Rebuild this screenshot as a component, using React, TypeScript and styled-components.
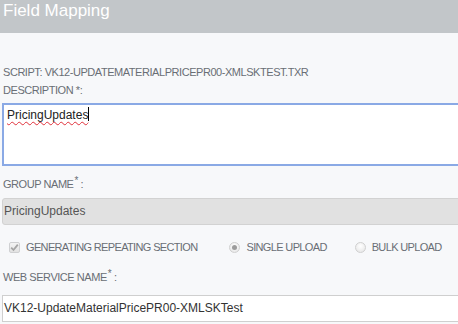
import React from 'react'
import styled, { createGlobalStyle } from 'styled-components'

const GlobalStyle = createGlobalStyle`
  html, body {
    margin: 0;
    padding: 0;
    background: #f7f8fa;
    overflow: hidden;
  }
  body {
    font-family: "Liberation Sans", Arial, sans-serif;
  }
`

const StyledPanel = styled.div`
  width: 470px;
  height: 324px;
  background: #f7f8fa;
`

const Header = styled.div`
  height: 33px;
  background: #c2c6c9;
  box-sizing: border-box;
  padding: 1px 0 0 3px;
  h2 {
    margin: 0;
    font-size: 17px;
    font-weight: normal;
    line-height: 20px;
    color: #fff;
  }
`

const Body = styled.div`
  padding: 32px 0 0 2px;
  display: flex;
  flex-direction: column;
`

const Label = styled.div<{ $top: number }>`
  margin-top: ${p => p.$top}px;
  padding-left: 1px;
  font-size: 11px;
  letter-spacing: -0.45px;
  line-height: 14px;
  color: #696e75;
  text-transform: uppercase;
  sup {
    font-size: 10px;
    line-height: 0;
    vertical-align: 4px;
    margin-left: 1px;
  }
`

const EditBox = styled.div`
  margin-top: 6px;
  height: 63px;
  box-sizing: border-box;
  border: 2px solid #8aa9e5;
  background: #fff;
  padding: 2px 3px;
  font-size: 12px;
  line-height: 16px;
  color: #222;
  .word {
    text-decoration: underline wavy #e0303a;
    text-decoration-thickness: 1px;
    text-underline-offset: 2px;
  }
  .caret {
    display: inline-block;
    width: 1px;
    height: 14px;
    background: #000;
    vertical-align: -2px;
  }
`

const Input = styled.div<{ $disabled?: boolean }>`
  margin-top: ${p => (p.$disabled ? 7 : 11)}px;
  height: 27px;
  box-sizing: border-box;
  border: 1px solid ${p => (p.$disabled ? '#d2d2d2' : '#cfcfcf')};
  border-radius: ${p => (p.$disabled ? '3px' : '0')};
  background: ${p => (p.$disabled ? '#e1e1e1' : '#fff')};
  padding: 0 0 0 1px;
  font-size: 12px;
  line-height: 25px;
  color: ${p => (p.$disabled ? '#555' : '#333')};
`

const OptionRow = styled.div`
  margin-top: 15px;
  padding-left: 7px;
  display: flex;
  align-items: center;
  height: 14px;
`

const Option = styled.label<{ $gap: number }>`
  display: flex;
  align-items: center;
  gap: 6px;
  margin-right: ${p => p.$gap}px;
  font-size: 11px;
  letter-spacing: -0.65px;
  line-height: 14px;
  color: #696e75;
`

const CheckBox = styled.span`
  width: 11px;
  height: 11px;
  box-sizing: border-box;
  border: 1px solid #cfd0d2;
  border-radius: 2px;
  background: linear-gradient(#f4f4f4, #e2e2e2);
  display: flex;
  align-items: center;
  justify-content: center;
`

const Radio = styled.span<{ $on?: boolean }>`
  width: 11px;
  height: 11px;
  box-sizing: border-box;
  border: 1px solid #d0d0d0;
  border-radius: 50%;
  background: radial-gradient(circle at 50% 35%, #ffffff, #e3e3e3);
  display: flex;
  align-items: center;
  justify-content: center;
  &::after {
    content: '';
    display: ${p => (p.$on ? 'block' : 'none')};
    width: 5px;
    height: 5px;
    border-radius: 50%;
    background: #9c9c9c;
  }
`

const App = () => {
  return (
    <>
      <GlobalStyle />
      <StyledPanel>
        <Header>
          <h2>Field Mapping</h2>
        </Header>
        <Body>
          <Label $top={0}>SCRIPT: VK12-UPDATEMATERIALPRICEPR00-XMLSKTEST.TXR</Label>
          <Label $top={4}>DESCRIPTION *:</Label>
          <EditBox>
            <span className="word">PricingUpdates</span>
            <span className="caret" />
          </EditBox>
          <Label $top={11}>GROUP NAME<sup>*</sup> :</Label>
          <Input $disabled>PricingUpdates</Input>
          <OptionRow>
            <Option $gap={32}>
              <CheckBox>
                <svg width="9" height="9" viewBox="0 0 9 9">
                  <path d="M1.2 4.6 L3.5 7 L7.8 1.6" fill="none" stroke="#a5a5a5" strokeWidth="1.8" />
                </svg>
              </CheckBox>
              GENERATING REPEATING SECTION
            </Option>
            <Option $gap={28}>
              <Radio $on />
              SINGLE UPLOAD
            </Option>
            <Option $gap={0}>
              <Radio />
              BULK UPLOAD
            </Option>
          </OptionRow>
          <Label $top={16}>WEB SERVICE NAME<sup>*</sup> :</Label>
          <Input>VK12-UpdateMaterialPricePR00-XMLSKTest</Input>
        </Body>
      </StyledPanel>
    </>
  )
}

export default App
